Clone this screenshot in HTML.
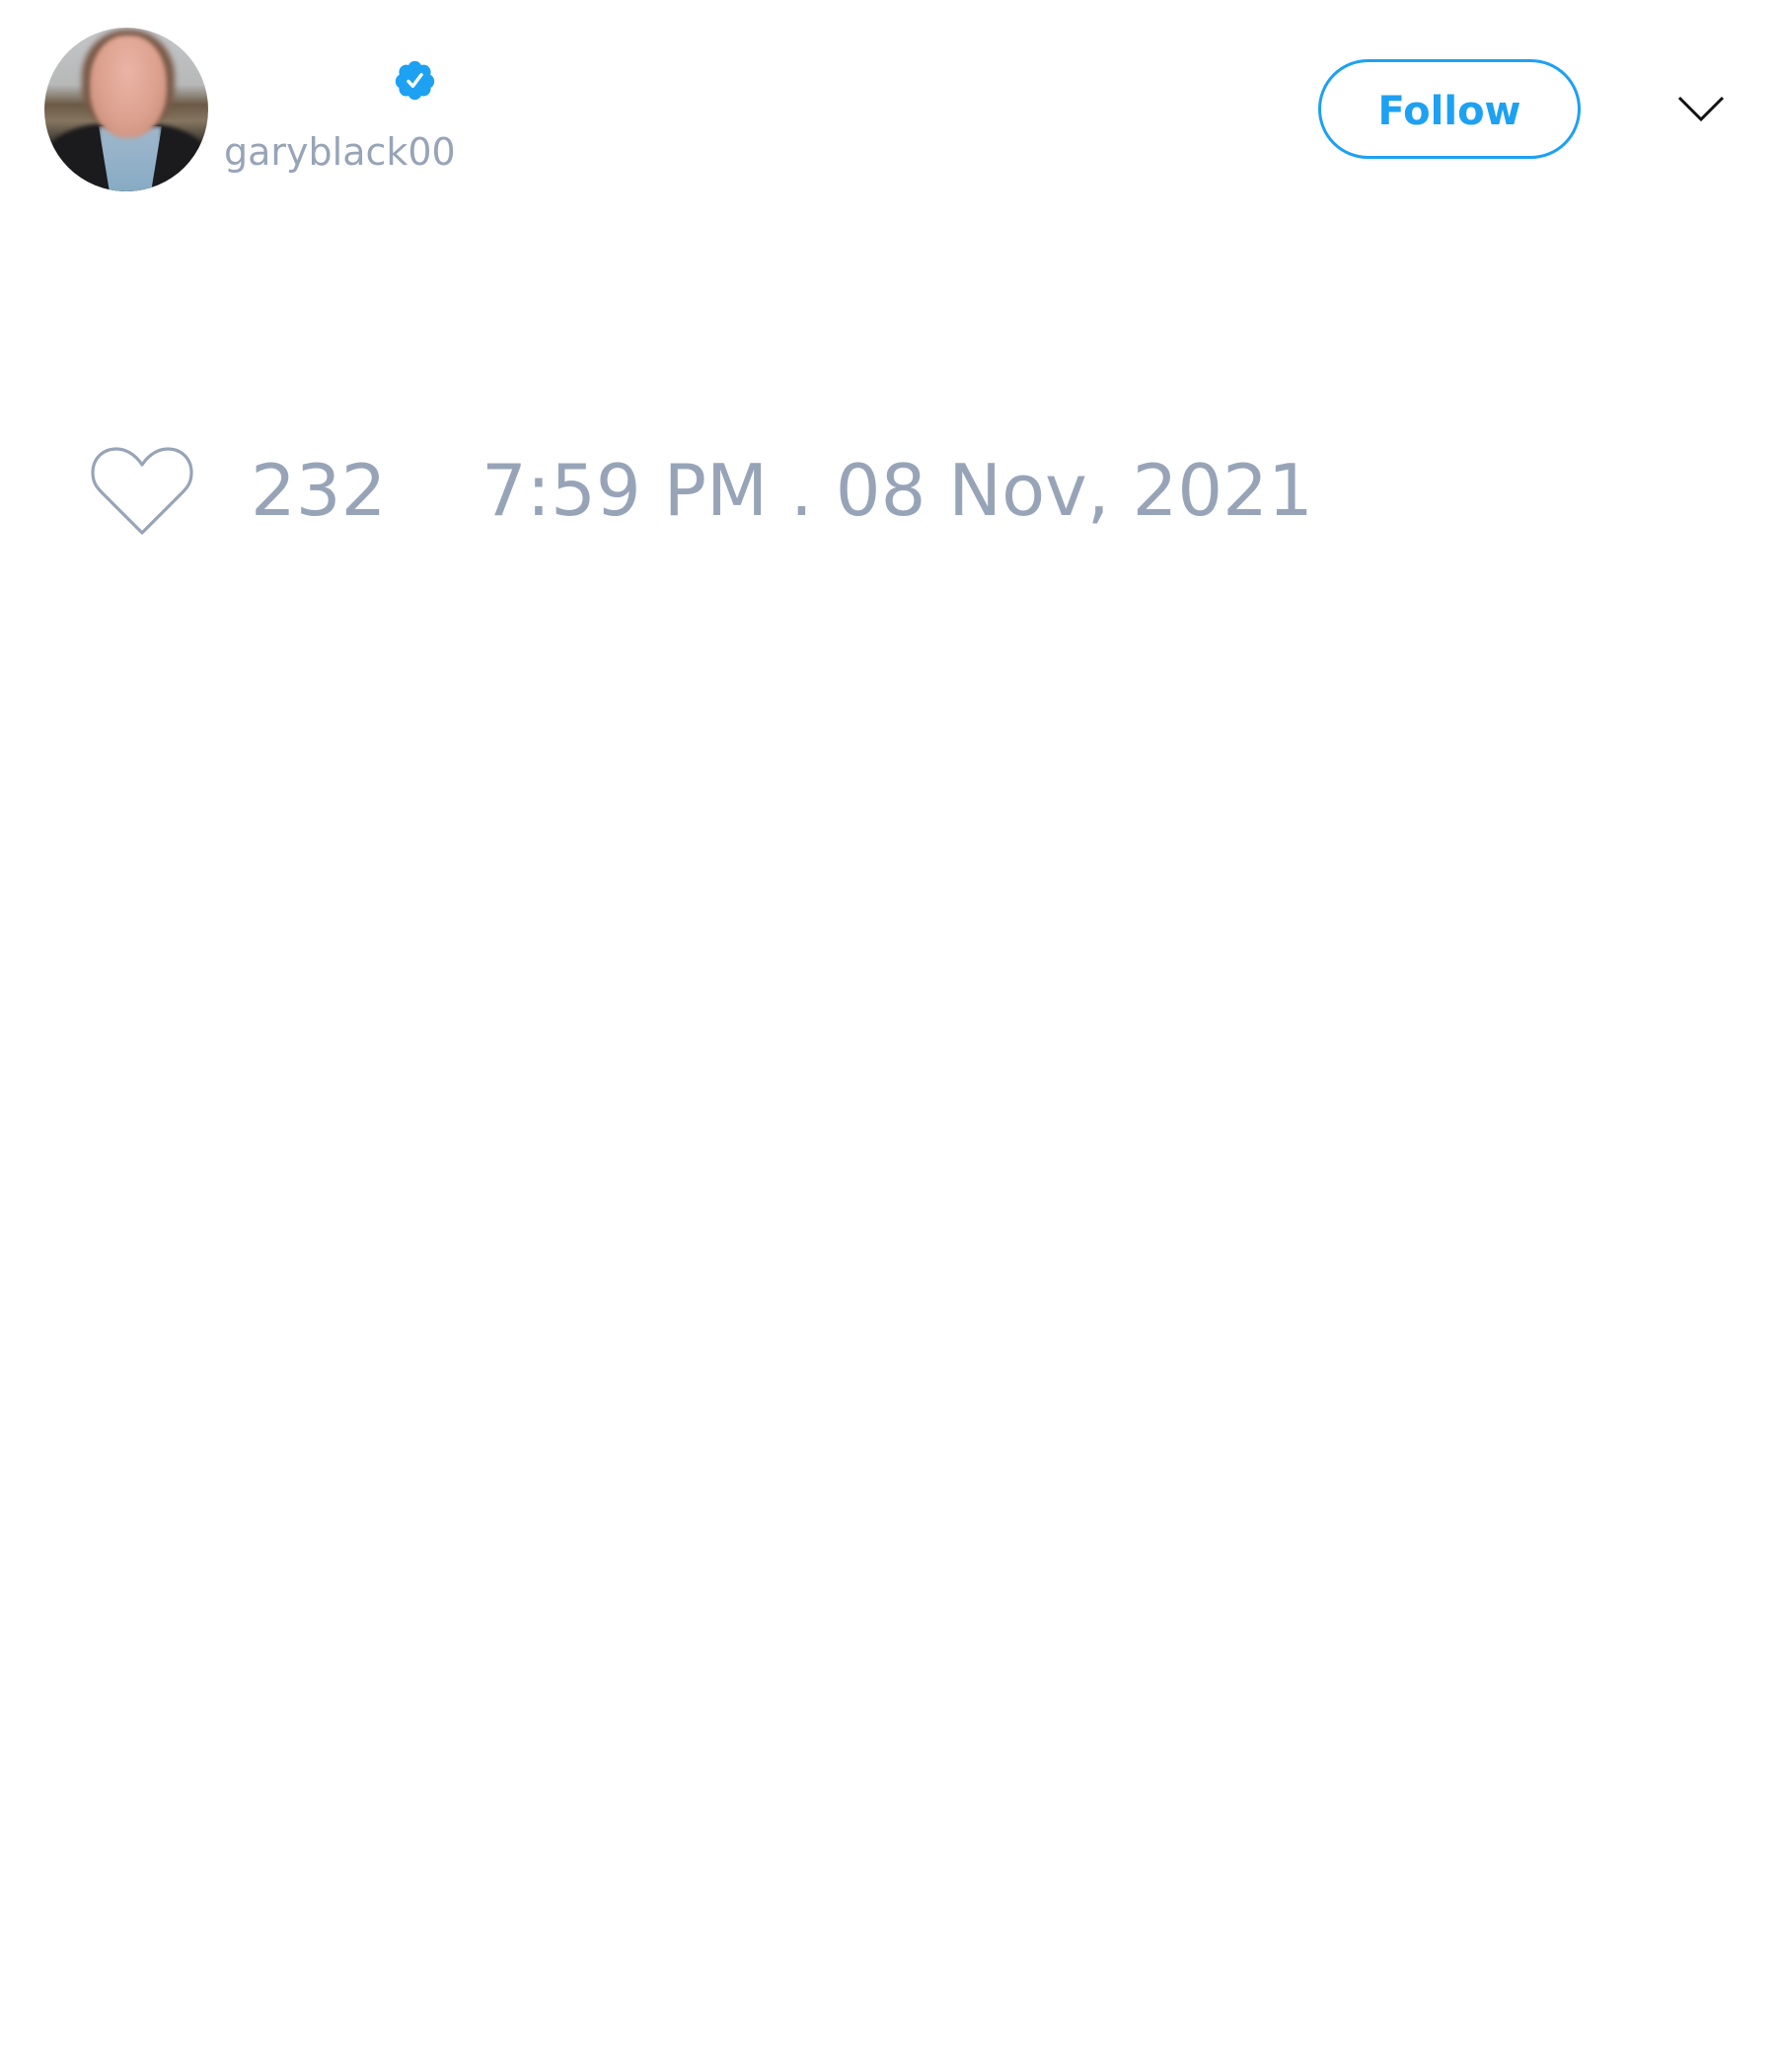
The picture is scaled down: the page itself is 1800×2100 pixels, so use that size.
<!DOCTYPE html>
<html><head><meta charset="utf-8"><style>
html,body{margin:0;padding:0;background:#fff;}
body{width:1800px;height:2100px;position:relative;overflow:hidden;font-family:"DejaVu Sans","Liberation Sans",sans-serif;}
.abs{position:absolute;}
.avatar{left:45px;top:28px;width:166px;height:166px;border-radius:50%;overflow:hidden;
background:linear-gradient(180deg,#c4c6c8 0%,#b7b8b8 35%,#6b5a45 47%,#857560 57%,#3a3530 70%,#1a1a1a 100%);}
.hair{left:38px;top:2px;width:94px;height:100px;border-radius:48% 48% 40% 40%;background:#7a5a48;filter:blur(3px);}
.face{left:46px;top:8px;width:78px;height:104px;border-radius:46% 46% 48% 48%;background:radial-gradient(ellipse at 50% 35%,#eab4a6 0%,#dca08e 55%,#c08672 100%);filter:blur(2px);}
.body1{left:0px;top:97px;width:166px;height:90px;border-radius:40% 40% 0 0;background:#1b1a1c;filter:blur(2px);}
.shirt{left:55px;top:100px;width:64px;height:70px;background:linear-gradient(180deg,#9fb8cc,#86aac4);clip-path:polygon(0 0,100% 0,82% 100%,18% 100%);filter:blur(2px);}
.handle{left:227px;top:135px;font-size:38px;line-height:38px;color:#97a4b8;white-space:nowrap;}
.btn{left:1336px;top:60px;width:266px;height:101px;box-sizing:border-box;border:3px solid #1da1f2;border-radius:51px;display:flex;align-items:center;justify-content:center;color:#1da1f2;font-weight:bold;font-size:40px;padding-top:5px;}
.stat{top:461px;font-size:72px;line-height:72px;color:#97a4b8;white-space:nowrap;}
</style></head><body>
<div class="abs avatar">
  <div class="abs body1"></div>
  <div class="abs shirt"></div>
  <div class="abs hair"></div>
  <div class="abs face"></div>
</div>
<svg class="abs" style="left:398px;top:59px" width="45" height="45" viewBox="0 0 24 24">
<path fill="#1da1f2" d="M22.5 12.5c0-1.58-.875-2.95-2.148-3.6.154-.435.238-.905.238-1.4 0-2.21-1.71-3.998-3.818-3.998-.47 0-.92.084-1.336.25C14.818 2.415 13.51 1.5 12 1.5s-2.816.917-3.437 2.25c-.415-.165-.866-.25-1.336-.25-2.11 0-3.818 1.790-3.818 4 0 .494.083.964.237 1.4-1.272.65-2.147 2.018-2.147 3.6 0 1.495.782 2.798 1.942 3.486-.02.17-.032.34-.032.514 0 2.21 1.708 4 3.818 4 .47 0 .92-.086 1.335-.25.62 1.334 1.926 2.25 3.437 2.25 1.512 0 2.818-.916 3.437-2.25.415.163.865.248 1.336.248 2.11 0 3.818-1.790 3.818-4 0-.174-.012-.344-.033-.513 1.158-.687 1.943-1.990 1.943-3.484z"/>
<path fill="none" stroke="#fff" stroke-width="1.8" stroke-linecap="round" stroke-linejoin="round" d="M8.5 12.5l2.4 2.6 4.6-6.2"/>
</svg>
<div class="abs handle">garyblack00</div>
<div class="abs btn">Follow</div>
<svg class="abs" style="left:1700px;top:96px" width="48" height="30" viewBox="0 0 48 30">
<path d="M2 3 L24 25 L46 3" fill="none" stroke="#111" stroke-width="3"/>
</svg>
<svg class="abs" style="left:90px;top:451px" width="108" height="94" viewBox="0 0 108 94">
<path d="M54 20 C46 8 36 4 28 4 C14 4 4 14 4 28 C4 38 8 43 14 49 L54 89 L94 49 C100 43 104 38 104 28 C104 14 94 4 80 4 C72 4 62 8 54 20 Z" fill="none" stroke="#97a4b8" stroke-width="3.2" stroke-linejoin="round"/>
</svg>
<div class="abs stat" style="left:254px">232</div>
<div class="abs stat" style="left:488px">7:59 PM . 08 Nov, 2021</div>
</body></html>
